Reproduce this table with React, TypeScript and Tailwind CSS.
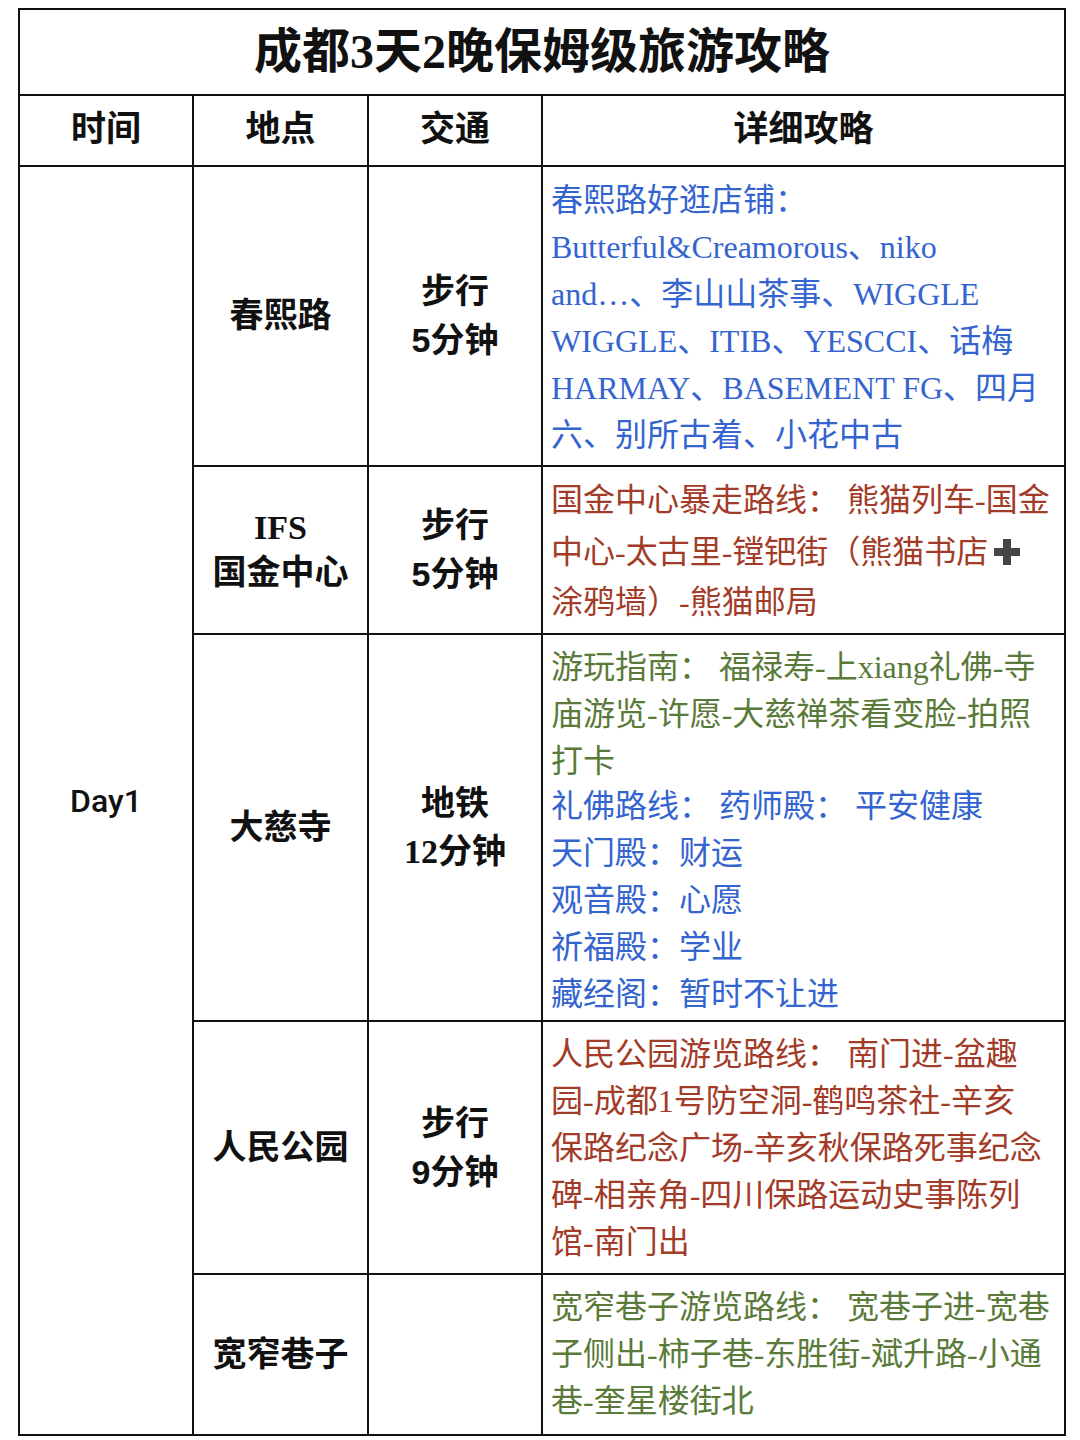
import React from "react";

const CJK = "'Liberation Serif','Noto Sans CJK SC',serif";

function Plus() {
  return (
    <svg width="30" height="30" viewBox="0 0 30 30" className="inline-block align-[-4px] ml-[4px]">
      <rect x="11" y="2" width="8" height="26" fill="#454545" />
      <rect x="2" y="11" width="26" height="8" fill="#454545" />
    </svg>
  );
}

function Lines({ lines, color, pt }: { lines: React.ReactNode[]; color: string; pt: string }) {
  return (
    <div className={`${pt} pl-[8px]`} style={{ color }}>
      {lines.map((l, i) => (
        <div key={i} className="whitespace-nowrap leading-[47px] text-[32px]">
          {l}
        </div>
      ))}
    </div>
  );
}

const BLUE = "#3464cf";
const RED = "#a23b28";
const GREEN = "#5a7a39";
const SANS = "'Liberation Sans','Noto Sans CJK SC',sans-serif";

export default function App() {
  const td = "border-2 border-[#111] p-0";
  const mid = `${td} text-center align-middle font-bold text-[34px] text-[#111] leading-[48px]`;
  return (
    <div className="bg-white w-[1080px] h-[1440px] pt-[8px] pl-[18px]" style={{ fontFamily: CJK }}>
      <table className="border-collapse table-fixed w-[1046px]">
        <colgroup>
          <col className="w-[174px]" />
          <col className="w-[175px]" />
          <col className="w-[174px]" />
          <col className="w-[523px]" />
        </colgroup>
        <tbody>
          <tr className="h-[86px]">
            <td colSpan={4} className={`${td} text-center align-middle font-bold text-[48px] text-[#111]`}>
              成都3天2晚保姆级旅游攻略
            </td>
          </tr>
          <tr className="h-[71px]">
            {["时间", "地点", "交通", "详细攻略"].map((h) => (
              <td key={h} className={`${td} text-center align-middle font-bold text-[35px] text-[#111]`}>
                {h}
              </td>
            ))}
          </tr>
          <tr className="h-[300px]">
            <td rowSpan={5} className={`${td} text-center align-middle text-[32px] text-[#111]`}>
              <span className="font-medium" style={{ fontFamily: "Roboto,'Liberation Sans',sans-serif" }}>Day1</span>
            </td>
            <td className={mid}>春熙路</td>
            <td className={mid}>
              <div>步行</div>
              <div style={{ fontFamily: SANS }}>5分钟</div>
            </td>
            <td className={`${td} align-top`}>
              <Lines
                color={BLUE}
                pt="pt-[10px]"
                lines={[
                  "春熙路好逛店铺：",
                  "Butterful&Creamorous、niko",
                  "and…、李山山茶事、WIGGLE",
                  "WIGGLE、ITIB、YESCCI、话梅",
                  "HARMAY、BASEMENT FG、四月",
                  "六、别所古着、小花中古",
                ]}
              />
            </td>
          </tr>
          <tr className="h-[168px]">
            <td className={mid}>
              <div>IFS</div>
              <div className="-mt-[3px]">国金中心</div>
            </td>
            <td className={mid}>
              <div>步行</div>
              <div style={{ fontFamily: SANS }}>5分钟</div>
            </td>
            <td className={`${td} align-top`}>
              <div className="pt-[8px] pl-[8px]" style={{ color: RED }}>
                <div className="whitespace-nowrap leading-[50px] text-[32px]">国金中心暴走路线： 熊猫列车-国金</div>
                <div className="whitespace-nowrap leading-[54px] text-[32px]">
                  中心-太古里-镗钯街（熊猫书店
                  <Plus />
                </div>
                <div className="whitespace-nowrap leading-[46px] text-[32px]">涂鸦墙）-熊猫邮局</div>
              </div>
            </td>
          </tr>
          <tr className="h-[387px]">
            <td className={mid}>大慈寺</td>
            <td className={mid}>
              <div>地铁</div>
              <div>12分钟</div>
            </td>
            <td className={`${td} align-top`}>
              <div className="pt-[9px]">
                <Lines
                  color={GREEN}
                  pt=""
                  lines={["游玩指南： 福禄寿-上xiang礼佛-寺", "庙游览-许愿-大慈禅茶看变脸-拍照", "打卡"]}
                />
                <Lines
                  color={BLUE}
                  pt="-mt-[2px]"
                  lines={["礼佛路线： 药师殿： 平安健康", "天门殿：财运", "观音殿：心愿", "祈福殿：学业", "藏经阁：暂时不让进"]}
                />
              </div>
            </td>
          </tr>
          <tr className="h-[253px]">
            <td className={mid}>人民公园</td>
            <td className={mid}>
              <div>步行</div>
              <div style={{ fontFamily: SANS }}>9分钟</div>
            </td>
            <td className={`${td} align-top`}>
              <Lines
                color={RED}
                pt="pt-[9px]"
                lines={[
                  "人民公园游览路线： 南门进-盆趣",
                  "园-成都1号防空洞-鹤鸣茶社-辛亥",
                  "保路纪念广场-辛亥秋保路死事纪念",
                  "碑-相亲角-四川保路运动史事陈列",
                  "馆-南门出",
                ]}
              />
            </td>
          </tr>
          <tr className="h-[161px]">
            <td className={mid}>宽窄巷子</td>
            <td className={mid}></td>
            <td className={`${td} align-top`}>
              <Lines
                color={GREEN}
                pt="pt-[9px]"
                lines={["宽窄巷子游览路线： 宽巷子进-宽巷", "子侧出-柿子巷-东胜街-斌升路-小通", "巷-奎星楼街北"]}
              />
            </td>
          </tr>
        </tbody>
      </table>
    </div>
  );
}
